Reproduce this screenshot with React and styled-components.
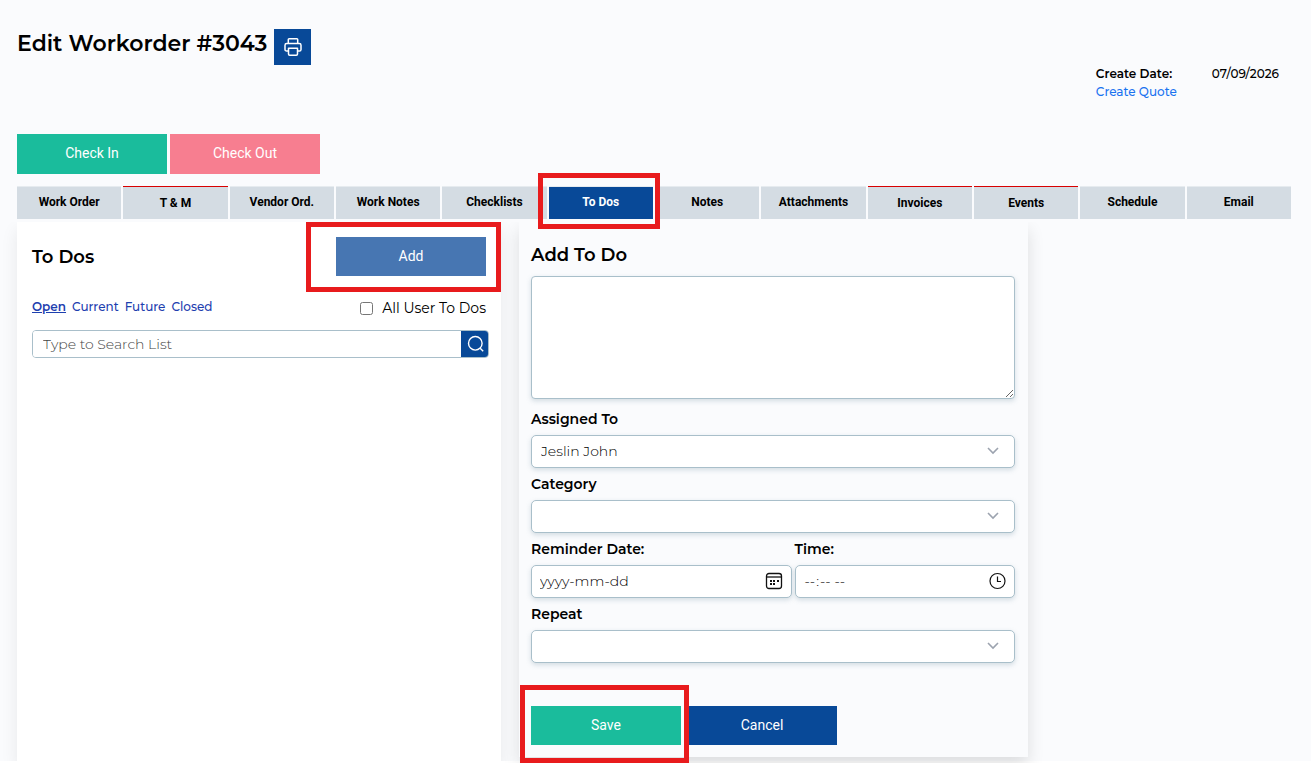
import React, { useState } from 'react';
import styled, { createGlobalStyle } from 'styled-components';

const tabs = [
	{ name: 'Work Order' },
	{ name: 'T & M', flagged: true },
	{ name: 'Vendor Ord.' },
	{ name: 'Work Notes' },
	{ name: 'Checklists' },
	{ name: 'To Dos', marked: true },
	{ name: 'Notes' },
	{ name: 'Attachments' },
	{ name: 'Invoices', flagged: true },
	{ name: 'Events', flagged: true },
	{ name: 'Schedule' },
	{ name: 'Email' }
];
const filters = [ 'Open', 'Current', 'Future', 'Closed' ];

const Chevron = () => (
	<svg width="12" height="8" viewBox="0 0 12 8" fill="none" stroke="#9ca3af" strokeWidth="1.6" aria-hidden="true">
		<path d="M1 1l5 5 5-5" />
	</svg>
);

const PrinterIcon = () => (
	<svg width="18" height="18" viewBox="0 0 18 18" fill="none" stroke="#fff" strokeWidth="1.5" strokeLinejoin="round" aria-hidden="true">
		<path d="M4.3 5.5V1.6c0-.5.3-.8.8-.8h7.8c.5 0 .8.3.8.8v3.9" />
		<path d="M4.5 13H2.6C1.6 13 1 12.4 1 11.4V7.2c0-1 .7-1.7 1.7-1.7h12.6c1 0 1.7.7 1.7 1.7v4.2c0 1-.6 1.6-1.6 1.6h-1.9" />
		<path d="M4.5 10.2h9V16c0 .7-.5 1.2-1.2 1.2H5.7c-.7 0-1.2-.5-1.2-1.2z" />
	</svg>
);

const SearchIcon = () => (
	<svg width="18" height="18" viewBox="0 0 18 18" fill="none" stroke="#fff" strokeWidth="1.4" aria-hidden="true">
		<circle cx="9.3" cy="8.3" r="6.8" />
		<path d="M14.2 13.2l3 3" />
	</svg>
);

const CalendarIcon = () => (
	<svg width="18" height="18" viewBox="0 0 18 18" fill="none" stroke="#111" strokeWidth="1.3" aria-hidden="true">
		<rect x="1.5" y="1.5" width="15" height="15" rx="2.5" />
		<path d="M1.5 5h15" />
		<g fill="#111" stroke="none">
			<rect x="5" y="8" width="2" height="2" />
			<rect x="8" y="8" width="2" height="2" />
			<rect x="12" y="8" width="2" height="2" />
			<rect x="5" y="11" width="2" height="2" />
			<rect x="8" y="11" width="2" height="2" />
		</g>
	</svg>
);

const ClockIcon = () => (
	<svg width="18" height="18" viewBox="0 0 18 18" fill="none" stroke="#111" strokeWidth="1.2" aria-hidden="true">
		<circle cx="9.5" cy="9" r="7.5" />
		<path d="M9.5 4.5v5H13" />
	</svg>
);

export default function App () {
	const [ tab, setTab ] = useState('To Dos');
	const [ filter, setFilter ] = useState('Open');

	return (
		<Page>
			<GlobalStyle />
			<Header>
				<Title>Edit Workorder #3043</Title>
				<PrintButton type="button" aria-label="Print">
					<PrinterIcon />
				</PrintButton>
				<Meta>
					<dt>Create Date:</dt>
					<dd>07/09/2026</dd>
					<a href="#quote">Create Quote</a>
				</Meta>
			</Header>

			<CheckBar>
				<Button type="button" $color="#1abc9c">Check In</Button>
				<Button type="button" $color="#f77e90">Check Out</Button>
			</CheckBar>

			<TabBar>
				{tabs.map((item) => {
					const button = (
						<Tab
							key={item.name}
							type="button"
							$active={tab === item.name}
							$flagged={item.flagged}
							onClick={() => setTab(item.name)}
						>
							{item.name}
						</Tab>
					);
					return item.marked ? <Marked key={item.name} $inset="-13px -7px -10px -11px">{button}</Marked> : button;
				})}
			</TabBar>

			<Columns>
				{/* to do list */}
				<ListPanel>
					<ListRow>
						<Heading>To Dos</Heading>
						<Marked $inset="-15px -15px -16px -30px">
							<Button type="button" $color="#4776b2">Add</Button>
						</Marked>
					</ListRow>
					<FilterRow>
						<Filters>
							{filters.map((name) => (
								<FilterLink key={name} href="#list" $active={filter === name} onClick={() => setFilter(name)}>
									{name}
								</FilterLink>
							))}
						</Filters>
						<CheckLabel htmlFor="allUsers">
							<input type="checkbox" id="allUsers" name="allUsers" />
							All User To Dos
						</CheckLabel>
					</FilterRow>
					<SearchBox>
						<input type="text" name="search" aria-label="Search list" placeholder="Type to Search List" />
						<button type="button" aria-label="Search">
							<SearchIcon />
						</button>
					</SearchBox>
				</ListPanel>
				{/* end of to do list */}

				{/* add form */}
				<FormPanel onSubmit={(e) => e.preventDefault()}>
					<Heading>Add To Do</Heading>
					<NoteArea name="note" aria-label="To do text" />
					<Label htmlFor="assigned">Assigned To</Label>
					<SelectBox>
						<select id="assigned" name="assigned" defaultValue="Jeslin John">
							<option>Jeslin John</option>
						</select>
						<Chevron />
					</SelectBox>
					<Label htmlFor="category">Category</Label>
					<SelectBox>
						<select id="category" name="category">
							<option value="" />
						</select>
						<Chevron />
					</SelectBox>
					<DateRow>
						<div>
							<Label htmlFor="date">Reminder Date:</Label>
							<PickerBox>
								<input type="text" id="date" name="date" placeholder="yyyy-mm-dd" />
								<CalendarIcon />
							</PickerBox>
						</div>
						<div>
							<Label htmlFor="time">Time:</Label>
							<PickerBox>
								<input type="time" id="time" name="time" />
								<ClockIcon />
							</PickerBox>
						</div>
					</DateRow>
					<Label htmlFor="repeat">Repeat</Label>
					<SelectBox>
						<select id="repeat" name="repeat">
							<option value="" />
						</select>
						<Chevron />
					</SelectBox>
					<Actions>
						<Marked $inset="-21px -8px -18px -11px">
							<Button type="submit" $color="#1abc9c">Save</Button>
						</Marked>
						<Button type="button" $color="#084998">Cancel</Button>
					</Actions>
				</FormPanel>
				{/* end of add form */}
			</Columns>
		</Page>
	);
}

const GlobalStyle = createGlobalStyle`
	* {
		box-sizing: border-box;
	}
	body {
		margin: 0;
		background: #fff;
		color: #000;
		font-family: Montserrat, Inter, sans-serif;
		font-size: 14px;
	}
	button, input, select, textarea {
		font-family: inherit;
	}
	button {
		cursor: pointer;
	}
`;

const Page = styled.main`
	display: flex;
	flex-direction: column;
	min-height: 100vh;
	padding: 29px 20px 0 17px;
	background: #fafbfd;
	border-bottom: 3px solid #fff;
`;

const Header = styled.header`
	display: flex;
	align-items: flex-start;
	gap: 7px;
	height: 105px;
`;

const Title = styled.h1`
	margin: 0;
	font-size: 22px;
	font-weight: 600;
	line-height: 30px;
`;

const PrintButton = styled.button`
	display: flex;
	align-items: center;
	justify-content: center;
	width: 37px;
	height: 36px;
	padding: 0;
	border: 0;
	background: #084998;
`;

const Meta = styled.dl`
	display: grid;
	grid-template-columns: 116px auto;
	margin: 36px 12px 0 auto;
	font-size: 12px;
	font-weight: 500;
	line-height: 18px;
	dt {
		font-weight: 600;
	}
	dd {
		margin: 0;
	}
	a {
		color: #1a73f0;
		text-decoration: none;
	}
`;

const Button = styled.button`
	width: 150px;
	height: 39px;
	padding: 0 0 2px;
	border: 0;
	background: ${(props) => props.$color};
	color: #fff;
	font-family: Roboto, sans-serif;
	font-size: 14px;
`;

const CheckBar = styled.div`
	display: flex;
	gap: 3px;
	margin-bottom: 12px;
	${Button} {
		height: 40px;
	}
`;

const TabBar = styled.nav`
	display: grid;
	grid-template-columns: repeat(12, 1fr);
	gap: 2px;
	margin-bottom: 3px;
`;

const Tab = styled.button`
	width: 100%;
	height: 33px;
	padding: ${(props) => (props.$flagged ? '0' : '0 0 2px')};
	border: 0;
	border-top: 1px solid ${(props) => (props.$flagged ? '#d80000' : '#e6ebef')};
	background: ${(props) => (props.$active ? '#084998' : '#d4dce3')};
	color: ${(props) => (props.$active ? '#fff' : '#000')};
	font-family: Roboto, sans-serif;
	font-size: 12px;
	font-weight: 700;
`;

/* red call-out frame around a control */
const Marked = styled.div`
	position: relative;
	display: flex;
	&::after {
		content: '';
		position: absolute;
		z-index: 2;
		inset: ${(props) => props.$inset};
		border: 5px solid #e81b1d;
		pointer-events: none;
	}
`;

const Columns = styled.div`
	display: grid;
	grid-template-columns: 484fr 509fr 245fr;
	gap: 18px;
	flex: 1;
	align-items: start;
`;

const ListPanel = styled.section`
	align-self: stretch;
	padding: 15px 12px 0 15px;
	background: #fff;
	box-shadow: 0 8px 16px rgba(0, 0, 0, 0.08);
	clip-path: inset(0 -20px);
`;

const Heading = styled.h2`
	margin: 0;
	font-size: 18px;
	font-weight: 600;
	line-height: 26px;
`;

const ListRow = styled.div`
	display: flex;
	align-items: center;
	justify-content: space-between;
	padding-right: 3px;
`;

const FilterRow = styled(ListRow)`
	align-items: flex-start;
	margin: 20px 0 10px;
	height: 24px;
`;

const Filters = styled.div`
	display: flex;
	gap: 6px;
	line-height: 22px;
`;

const FilterLink = styled.a`
	color: #1e40af;
	font-size: 12px;
	font-weight: ${(props) => (props.$active ? '600' : '500')};
	text-decoration: ${(props) => (props.$active ? 'underline' : 'none')};
`;

const CheckLabel = styled.label`
	display: flex;
	align-items: center;
	gap: 9px;
	line-height: 24px;
	input {
		width: 13px;
		height: 13px;
		margin: 0;
	}
`;

const SearchBox = styled.div`
	display: flex;
	height: 28px;
	border: 1px solid #a9bfca;
	border-radius: 4px;
	overflow: hidden;
	input {
		flex: 1;
		min-width: 0;
		padding: 0 10px;
		border: 0;
		outline: 0;
		font-size: 14px;
		font-weight: 300;
	}
	input::placeholder {
		color: #444;
	}
	button {
		display: flex;
		align-items: center;
		justify-content: center;
		width: 27px;
		padding: 0;
		border: 0;
		background: #084998;
	}
`;

const FormPanel = styled.form`
	padding: 20px 13px 12px 12px;
	box-shadow: 0 8px 16px rgba(0, 0, 0, 0.12);
	clip-path: inset(0 -20px -6px);
	${Heading} {
		margin-bottom: 8px;
	}
`;

const NoteArea = styled.textarea`
	display: block;
	width: 100%;
	height: 123px;
	margin-bottom: 4px;
	padding: 8px;
	border: 1px solid #a9bfca;
	border-radius: 4px;
	background: #fff;
	box-shadow: 0 2px 5px rgba(120, 150, 165, 0.3);
	outline: 0;
`;

const Label = styled.label`
	display: block;
	font-weight: 600;
	line-height: 32px;
`;

const FieldBox = styled.div`
	display: flex;
	align-items: center;
	height: 33px;
	padding-bottom: 2px;
	border: 1px solid #a9bfca;
	border-radius: 5px;
	background: #fff;
	box-shadow: 0 2px 5px rgba(120, 150, 165, 0.3);
	input,
	select {
		flex: 1;
		min-width: 0;
		height: 100%;
		border: 0;
		outline: 0;
		background: transparent;
		color: #000;
		font-size: 14px;
		font-weight: 300;
	}
`;

const SelectBox = styled(FieldBox)`
	position: relative;
	select {
		appearance: none;
		padding: 0 36px 0 9px;
	}
	svg {
		position: absolute;
		right: 15px;
		pointer-events: none;
	}
`;

const PickerBox = styled(FieldBox)`
	padding: 0 8px 2px;
	input {
		padding: 0;
	}
	input::placeholder {
		color: #000;
	}
	input::-webkit-calendar-picker-indicator {
		display: none;
	}
`;

const DateRow = styled.div`
	display: grid;
	grid-template-columns: 13fr 11fr;
	gap: 3px;
`;

const Actions = styled.div`
	display: flex;
	gap: 6px;
	margin-top: 43px;
`;
